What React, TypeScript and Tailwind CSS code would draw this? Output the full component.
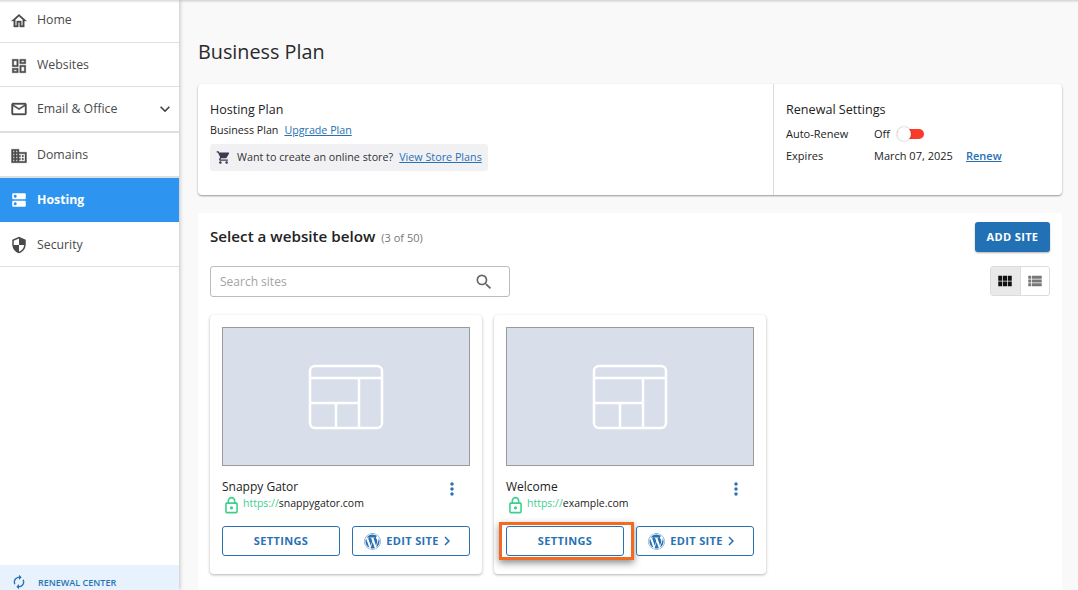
import type { ReactNode } from "react";
import {
  MdAutorenew,
  MdChevronRight,
  MdDns,
  MdExpandMore,
  MdMoreVert,
  MdOutlineLock,
  MdSearch,
  MdSecurity,
  MdShoppingCart,
  MdViewList,
  MdViewModule,
} from "react-icons/md";
import { FaWordpress } from "react-icons/fa";

// slightly heavier than the package's outlined icons, the picture renders them bold
function Glyph({ d }: { d: string }) {
  return (
    <svg width="18" height="18" viewBox="0 0 24 24" fill="currentColor" stroke="currentColor" strokeWidth="0.5">
      <path d={d} />
    </svg>
  );
}

const homePath = "M12 5.69l5 4.5V18h-2v-6H9v6H7v-7.81l5-4.5M12 3L2 12h3v8h6v-6h2v6h6v-8h3L12 3z";
const dashboardPath =
  "M19 5v2h-4V5h4M9 5v6H5V5h4m10 8v6h-4v-6h4M9 17v2H5v-2h4M21 3h-8v6h8V3zM11 3H3v10h8V3zm10 8h-8v10h8V11zm-10 4H3v6h8v-6z";
const emailPath =
  "M22 6c0-1.1-.9-2-2-2H4c-1.1 0-2 .9-2 2v12c0 1.1.9 2 2 2h16c1.1 0 2-.9 2-2V6zm-2 0l-8 5-8-5h16zm0 12H4V8l8 5 8-5v10z";
const domainPath =
  "M12 7V3H2v18h20V7H12zM6 19H4v-2h2v2zm0-4H4v-2h2v2zm0-4H4V9h2v2zm0-4H4V5h2v2zm4 12H8v-2h2v2zm0-4H8v-2h2v2zm0-4H8V9h2v2zm0-4H8V5h2v2zm10 12h-8v-2h2v-2h-2v-2h2v-2h-2V9h8v10zm-2-8h-2v2h2v-2zm0 4h-2v2h2v-2z";

function NavRow({
  icon,
  label,
  className,
  active,
  chevron,
}: {
  icon: ReactNode;
  label: string;
  className: string;
  active?: boolean;
  chevron?: boolean;
}) {
  return (
    <div
      className={`flex shrink-0 items-center pl-[10px] pr-[4px] text-[12.3px] ${className} ${
        active ? "bg-[#2d94f0] font-bold text-white" : "bg-white text-[#4a4a4a]"
      }`}
    >
      <span className="flex w-[27px] shrink-0 text-[18px]">{icon}</span>
      <span className="flex-1">{label}</span>
      {chevron && <MdExpandMore className="text-[20px] text-[#444]" />}
    </div>
  );
}

function Sidebar() {
  return (
    <aside className="z-10 flex h-[590px] w-[179px] shrink-0 flex-col overflow-hidden bg-white shadow-[1px_0_4px_rgba(0,0,0,0.22)]">
      <NavRow icon={<Glyph d={homePath} />} label="Home" className="h-[43px] border-b border-[#dfdfdf] pb-[1px]" />
      <NavRow icon={<Glyph d={dashboardPath} />} label="Websites" className="h-[44px] border-b border-[#dfdfdf] pt-[2px]" />
      <NavRow icon={<Glyph d={emailPath} />} label="Email & Office" chevron className="h-[46px] border-b-2 border-[#dfdfdf]" />
      <NavRow icon={<Glyph d={domainPath} />} label="Domains" className="h-[45px] border-b-2 border-[#dfdfdf] pt-[2px]" />
      <NavRow icon={<MdDns />} label="Hosting" active className="h-[44px]" />
      <NavRow icon={<MdSecurity />} label="Security" className="h-[45px] border-b border-[#dfdfdf] pt-[2px]" />
      <div className="h-[298px] shrink-0" />
      <div className="flex h-[40px] shrink-0 items-start bg-[#e7f2fc] pl-[11px] pt-[9px] text-[9px] font-semibold text-[#2b72b5]">
        <MdAutorenew className="mr-[11px] text-[16px]" />
        <span className="leading-[18px]">RENEWAL CENTER</span>
      </div>
    </aside>
  );
}

function OutlineButton({ children, highlighted, className }: { children: ReactNode; highlighted?: boolean; className?: string }) {
  return (
    <div className="relative h-[30px] flex-1">
      <button
        className={`flex h-full w-full items-center justify-center rounded-[3px] border border-[#2871b5] bg-white text-[11px] font-bold tracking-[0.35px] text-[#2871b5] ${className ?? ""}`}
      >
        {children}
      </button>
      {highlighted && (
        <div className="absolute -bottom-[4px] -left-[7px] -right-[10px] -top-[4px] border-[3px] border-[#f26a21] shadow-[0_3px_7px_rgba(0,0,0,0.45)]" />
      )}
    </div>
  );
}

function Placeholder() {
  return (
    <div className="flex h-[139px] items-center justify-center border border-[#9a9a9a] bg-[#d8dfea]">
      <svg width="76" height="66" viewBox="0 0 76 66" fill="none" stroke="white" strokeWidth="2.5">
        <rect x="2" y="2" width="72" height="62" rx="5" />
        <path d="M2 14H74M51 14V64M2 39H51M28 39V64" />
      </svg>
    </div>
  );
}

function SiteCard({ name, domain, highlighted }: { name: string; domain: string; highlighted?: boolean }) {
  return (
    <div className="h-[259px] w-[272px] rounded-[4px] bg-white px-[12px] pt-[12px] shadow-[0_1px_3px_rgba(0,0,0,0.3)]">
      <Placeholder />
      <div className="relative mt-[12px] h-[35px]">
        <div className="text-[12px] leading-[17px] text-[#222]">{name}</div>
        <div className="flex h-[17px] items-center text-[10.5px] text-[#222]">
          <MdOutlineLock className="mr-[2px] mt-[3px] text-[19px] text-[#3ecf8e]" />
          <span className="text-[#3ecf8e]">https://</span>
          {domain}
        </div>
        <MdMoreVert className="absolute right-[8px] top-[1px] text-[20px] text-[#2871b5]" />
      </div>
      <div className="mt-[13px] flex gap-[12px]">
        <OutlineButton highlighted={highlighted}>SETTINGS</OutlineButton>
        <OutlineButton className="pr-[2px]">
          <FaWordpress className="mr-[5px] text-[17px]" />
          EDIT SITE
          <MdChevronRight className="-ml-[1px] text-[18px]" />
        </OutlineButton>
      </div>
    </div>
  );
}

function PlanCard() {
  return (
    <section className="flex h-[111px] rounded-[4px] bg-white shadow-[0_1px_2px_rgba(0,0,0,0.4)]">
      <div className="flex-1 px-[12px] pt-[17px]">
        <h2 className="text-[12.5px] font-medium leading-[18px] text-[#222]">Hosting Plan</h2>
        <p className="mt-[2px] text-[10.7px] leading-[18px] text-[#222]">
          Business Plan
          <a className="ml-[6px] text-[#2871b5] underline">Upgrade Plan</a>
        </p>
        <div className="mt-[5px] inline-flex h-[27px] items-center rounded-[3px] bg-[#f1f1f4] pl-[6px] pr-[6px] text-[10.75px] text-[#333]">
          <MdShoppingCart className="mr-[6px] text-[15px] text-[#3c3c50]" />
          Want to create an online store?
          <a className="ml-[6px] text-[#2871b5] underline">View Store Plans</a>
        </div>
      </div>
      <div className="w-[289px] border-l border-[#dcdcdc] px-[12px] pt-[17px] text-[11px] text-[#222]">
        <h2 className="text-[12.6px] font-normal leading-[18px]">Renewal Settings</h2>
        <div className="mt-[6px] flex h-[18px] items-center">
          <span className="w-[88px]">Auto-Renew</span>
          <span>Off</span>
          <span className="relative ml-[7px] h-[10px] w-[27px] rounded-full bg-[#f93a2d]">
            <span className="absolute -top-[2px] left-0 h-[14px] w-[14px] rounded-full bg-white shadow-[0_0_2px_rgba(0,0,0,0.35)]" />
          </span>
        </div>
        <div className="mt-[4px] flex h-[18px] items-center">
          <span className="w-[88px]">Expires</span>
          <span className="w-[92px]">March 07, 2025</span>
          <a className="font-semibold text-[#2871b5] underline">Renew</a>
        </div>
      </div>
    </section>
  );
}

function SitesPanel() {
  return (
    <section className="mt-[18px] h-[400px] rounded-t-[4px] bg-white px-[12px] pt-[9px]">
      <div className="flex items-start justify-between">
        <h2 className="mt-[5px] text-[15.2px] font-semibold leading-[18px] text-[#222]">
          Select a website below
          <span className="ml-[6px] text-[11px] font-normal text-[#777]">(3 of 50)</span>
        </h2>
        <button className="h-[30px] w-[75px] rounded-[3px] bg-[#2271b5] text-[11px] font-bold tracking-[0.35px] text-white shadow-[0_1px_2px_rgba(0,0,0,0.3)]">
          ADD SITE
        </button>
      </div>
      <div className="mt-[14px] flex items-start justify-between">
        <div className="flex h-[31px] w-[300px] items-center justify-between rounded-[3px] border border-[#bcbcbc] pl-[9px] pr-[15px] text-[12px] text-[#a3a3a3]">
          Search sites
          <MdSearch className="text-[20px] text-[#666]" />
        </div>
        <div className="flex h-[30px] w-[60px] overflow-hidden rounded-[3px] border border-[#dcdcdc]">
          <span className="flex flex-1 items-center justify-center border-r border-[#dcdcdc] bg-[#e9e9e9] text-[18px] text-[#111]">
            <MdViewModule />
          </span>
          <span className="flex flex-1 items-center justify-center text-[18px] text-[#777]">
            <MdViewList />
          </span>
        </div>
      </div>
      <div className="mt-[18px] flex gap-[12px]">
        <SiteCard name="Snappy Gator" domain="snappygator.com" />
        <SiteCard name="Welcome" domain="example.com" highlighted />
      </div>
    </section>
  );
}

export default function App() {
  return (
    <div className="relative flex h-[590px] w-[1078px] overflow-hidden bg-[#f9f9f9] font-['Open_Sans',sans-serif]">
      <Sidebar />
      <main className="w-[883px] pl-[19px] pt-[38px]">
        <h1 className="text-[19.8px] font-normal leading-[28px] text-[#2a2a2a]">Business Plan</h1>
        <div className="mt-[18px] w-[864px]">
          <PlanCard />
          <SitesPanel />
        </div>
      </main>
      <div className="pointer-events-none absolute inset-x-0 top-0 z-20 h-[3px] bg-gradient-to-b from-black/15 to-transparent" />
    </div>
  );
}
